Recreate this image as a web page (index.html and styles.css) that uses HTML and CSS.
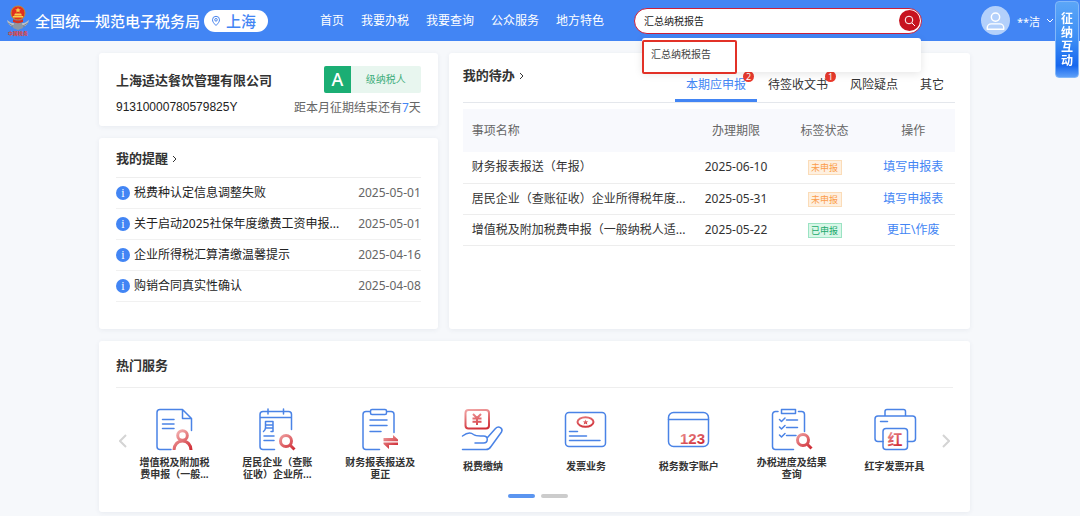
FILE: index.html
```html
<!DOCTYPE html>
<html lang="zh-CN">
<head>
	<meta charset="UTF-8">
	<meta name="viewport" content="width=device-width,initial-scale=1.0">
	<title>全国统一规范电子税务局</title>
	<link rel="stylesheet" href="styles.css">
</head>
<body>
	<svg class="defs" width="0" height="0" aria-hidden="true">
		<defs>
			<linearGradient id="red" x1="0" y1="0" x2="0.6" y2="1">
				<stop offset="0" stop-color="#f0a5a5"/>
				<stop offset="1" stop-color="#cf2a33"/>
			</linearGradient>
			<linearGradient id="redLine" gradientUnits="userSpaceOnUse" x1="25" y1="24" x2="39" y2="43">
				<stop offset="0" stop-color="#f3b0b0"/>
				<stop offset="1" stop-color="#cf2a33"/>
			</linearGradient>
			<linearGradient id="redCard" gradientUnits="userSpaceOnUse" x1="14" y1="2" x2="18" y2="23">
				<stop offset="0" stop-color="#f0a0a0"/>
				<stop offset="1" stop-color="#cf2a33"/>
			</linearGradient>
		</defs>
	</svg>
	<header class="header">
		<svg class="logo" viewBox="0 0 24 32" aria-hidden="true">
			<path d="M1 15c1 5 4 7 11 7s10-2 11-7c-3 2-4 3-5 3H6c-1 0-2-1-5-3z" fill="#b9c0c9"/>
			<path d="M2 18l5 3M22 18l-5 3M5 22l4-2M19 22l-4-2" stroke="#7d8794" stroke-width="1"/>
			<path d="M8 18h8l1 5-5 2-5-2z" fill="#8e97a3"/>
			<circle cx="12" cy="8" r="7" fill="#e0301e" stroke="#c98a2b"/>
			<path d="M12 2.500l.8 1.700 1.900.2-1.400 1.300.4 1.900-1.700-1-1.700 1 .4-1.900-1.400-1.300 1.900-.2zM7 11h10v1.500H7zM9 8.500h6l1 2H8z" fill="#f8cf4c"/>
			<path d="M7 14c2 2 8 2 10 0v3c-3 1.500-7 1.500-10 0z" fill="#d8321f"/>
			<text x="12" y="30" text-anchor="middle" class="logo-text">中国税务</text>
		</svg>
		<h1 class="site-name">全国统一规范电子税务局</h1>
		<button type="button" class="area">
			<svg width="10" height="12" viewBox="0 0 10 12" fill="none" stroke="#4a86ee" aria-hidden="true">
				<path d="M5 10.500C2.500 8 1.500 6.500 1.500 4.800a3.500 3.500 0 0 1 7 0C8.500 6.500 7.500 8 5 10.500z"/>
				<circle cx="5" cy="4.800" r="1.300"/>
			</svg>
			<span>上海</span>
		</button>
		<nav class="nav">
			<a href="#">首页</a>
			<a href="#">我要办税</a>
			<a href="#">我要查询</a>
			<a href="#">公众服务</a>
			<a href="#">地方特色</a>
		</nav>
		<form class="search">
			<input type="text" class="search-input" value="汇总纳税报告" aria-label="搜索">
			<button type="button" class="search-btn" aria-label="搜索">
				<svg width="12" height="12" viewBox="0 0 12 12" fill="none" stroke="#fff" aria-hidden="true">
					<circle cx="5" cy="5" r="3.800"/><path d="M8 8l3 3"/>
				</svg>
			</button>
			<div class="suggest">
				<a href="#" class="suggest-item">汇总纳税报告</a>
				<span class="suggest-mark"></span>
			</div>
		</form>
		<button type="button" class="user">
			<svg class="avatar" viewBox="0 0 30 30" fill="none" aria-hidden="true">
				<circle cx="15" cy="15" r="15" fill="#b3d0fb"/>
				<circle cx="15" cy="11.500" r="4.300" stroke="#fff" stroke-width="1.500"/>
				<path d="M6.500 24v-1.500c0-2.500 2-4 4-4h9c2 0 4 1.500 4 4V24z" stroke="#fff" stroke-width="1.500" stroke-linejoin="round"/>
			</svg>
			<span>**洁</span>
			<svg class="user-arrow" width="8" height="6" viewBox="0 0 8 6" fill="none" stroke="#fff" aria-hidden="true"><path d="M1 1l3 3 3-3"/></svg>
		</button>
	</header>
	<a href="#" class="interact">征纳互动</a>

	<main class="main">
		<div class="left">
			<section class="card company">
				<div class="company-row">
					<h2 class="title">上海适达餐饮管理有限公司</h2>
					<div class="level"><b>A</b><span>级纳税人</span></div>
				</div>
				<div class="company-row">
					<span class="company-no">91310000780579825Y</span>
					<span class="deadline">距本月征期结束还有<em>7</em>天</span>
				</div>
			</section>
			<section class="card remind">
				<h2 class="title remind-title"><a href="#">我的提醒<svg width="6" height="8" viewBox="0 0 6 8" fill="none" stroke="#333" aria-hidden="true"><path d="M1 1l3 3-3 3"/></svg></a></h2>
				<ul class="remind-list">
					<li><i class="info">i</i><a href="#">税费种认定信息调整失败</a><time>2025-05-01</time></li>
					<li><i class="info">i</i><a href="#">关于启动2025社保年度缴费工资申报...</a><time>2025-05-01</time></li>
					<li><i class="info">i</i><a href="#">企业所得税汇算清缴温馨提示</a><time>2025-04-16</time></li>
					<li><i class="info">i</i><a href="#">购销合同真实性确认</a><time>2025-04-08</time></li>
				</ul>
			</section>
		</div>

		<section class="card todo">
			<div class="todo-head">
				<h2 class="title"><a href="#">我的待办<svg width="6" height="8" viewBox="0 0 6 8" fill="none" stroke="#333" aria-hidden="true"><path d="M1 1l3 3-3 3"/></svg></a></h2>
				<div class="tabs">
					<button type="button" class="tab active">本期应申报<span class="badge">2</span></button>
					<button type="button" class="tab">待签收文书<span class="badge">1</span></button>
					<button type="button" class="tab">风险疑点</button>
					<button type="button" class="tab">其它</button>
				</div>
			</div>
			<table class="table">
				<thead>
					<tr><th class="col-name">事项名称</th><th class="col-date">办理期限</th><th class="col-tag">标签状态</th><th class="col-op">操作</th></tr>
				</thead>
				<tbody>
					<tr>
						<td class="col-name">财务报表报送（年报）</td>
						<td>2025-06-10</td>
						<td><span class="tag">未申报</span></td>
						<td><a href="#">填写申报表</a></td>
					</tr>
					<tr>
						<td class="col-name">居民企业（查账征收）企业所得税年度...</td>
						<td>2025-05-31</td>
						<td><span class="tag">未申报</span></td>
						<td><a href="#">填写申报表</a></td>
					</tr>
					<tr>
						<td class="col-name">增值税及附加税费申报（一般纳税人适...</td>
						<td>2025-05-22</td>
						<td><span class="tag tag-done">已申报</span></td>
						<td><a href="#">更正\作废</a></td>
					</tr>
				</tbody>
			</table>
		</section>

		<section class="card service">
			<h2 class="title service-title">热门服务</h2>
			<div class="carousel">
				<button type="button" class="arrow" aria-label="上一页"><svg width="8" height="14" viewBox="0 0 8 14" aria-hidden="true"><path d="M7 1L1 7l6 6"/></svg></button>
				<div class="service-list">
					<a href="#" class="service-item">
						<svg class="icon" viewBox="0 0 44 44" aria-hidden="true">
							<path d="M19 42.500H8a3 3 0 0 1-3-3v-34a3 3 0 0 1 3-3h22.500l9 9v12M30.500 2.500v9h9M10.500 12.500h11.500M10.500 17h11.500M10.500 21.500h11.500"/>
							<g class="red"><circle cx="30.500" cy="28.500" r="4.800"/><path d="M22 43c0-5 3.500-9 8.500-9s8.500 4 8.500 9"/></g>
						</svg>
						<span>增值税及附加税费申报（一般...</span>
					</a>
					<a href="#" class="service-item">
						<svg class="icon" viewBox="0 0 44 44" aria-hidden="true">
							<path d="M19.500 42.500H8a3 3 0 0 1-3-3v-32a3 3 0 0 1 3-3h25.500a3 3 0 0 1 3 3v15M5 10.500h31.500M13 2v5M28.500 2v5M9 29h10M9 33.500h10"/>
							<path d="M10.500 14.500h7.500v10h-2M10.500 14.500v6q0 2.500-2 4M10.500 18h7.500M10.500 21h7.500"/>
							<g class="red"><circle cx="31" cy="34" r="5.500"/><path d="M35.500 38.500l4 4"/></g>
						</svg>
						<span>居民企业（查账征收）企业所...</span>
					</a>
					<a href="#" class="service-item">
						<svg class="icon" viewBox="0 0 44 44" aria-hidden="true">
							<path d="M21.500 42.500H8a3 3 0 0 1-3-3v-32a3 3 0 0 1 3-3h4.500M28.500 4.500H33a3 3 0 0 1 3 3v18M14 2.500h13a1.500 1.500 0 0 1 1.500 1.500v2a1.500 1.500 0 0 1-1.500 1.500H14A1.500 1.500 0 0 1 12.500 6V4A1.500 1.500 0 0 1 14 2.500zM12 13h17M12 18.500h17M12 24.500h11"/>
							<path class="red-fill" d="M25.500 31h9.500v-3l5 4.500v1.700H25.500zM40 35.500v2.500h-9v4l-5.500-5v-1.500z"/>
						</svg>
						<span>财务报表报送及更正</span>
					</a>
					<a href="#" class="service-item">
						<svg class="icon" viewBox="0 0 44 44" aria-hidden="true">
							<path d="M1.500 29c4-3 8-4 11-1.500 2 1.500 4 1.500 7 1.500h3c5 0 5 7 0 7H14M26.500 30.500l8-9c3-3 8-.5 6 3.500L30 39.500c-1.500 2.500-3 3-5 3H1.500"/>
							<g class="red red-area"><rect x="4.500" y="3" width="23.500" height="18.500" rx="3"/><path d="M12 7l4 4 4-4M16 11v7M11.500 11.500h9M11.500 14.800h9"/></g>
						</svg>
						<span>税费缴纳</span>
					</a>
					<a href="#" class="service-item">
						<svg class="icon" viewBox="0 0 44 44" aria-hidden="true">
							<rect x="1.500" y="5.500" width="40" height="34" rx="3.500"/>
							<path d="M5.500 24.500h8M5.500 29h17M5.500 33.500h30.500"/>
							<g class="red red-area"><ellipse cx="21.500" cy="15" rx="8" ry="4.800"/></g>
							<path class="red-fill" d="M21.500 12.500l.8 1.700 2 .2-1.500 1.200.5 1.800-1.800-1-1.800 1 .5-1.800-1.500-1.200 2-.2z"/>
						</svg>
						<span>发票业务</span>
					</a>
					<a href="#" class="service-item">
						<svg class="icon" viewBox="0 0 44 44" aria-hidden="true">
							<rect x="1.500" y="5.500" width="40" height="34" rx="5"/>
							<path d="M1.500 12.500h40"/>
							<text x="25.500" y="36.500" text-anchor="middle" class="icon-num">123</text>
						</svg>
						<span>税务数字账户</span>
					</a>
					<a href="#" class="service-item">
						<svg class="icon" viewBox="0 0 44 44" aria-hidden="true">
							<path d="M23.500 42.500H5.500a3 3 0 0 1-3-3v-32a3 3 0 0 1 3-3H8M28.500 4.500h3a3 3 0 0 1 3 3v17M11.500 2.500h14v4h-14zM16.500 13h11M16.500 20.500h11M16.500 28.500h9.500M9.500 12.500l2 2 3.500-3.500M9.500 20l2 2 3.500-3.500M9.500 28l2 2 3.500-3.500"/>
							<g class="red"><circle cx="33" cy="33" r="5.500"/><path d="M37.500 37.500l4 4"/></g>
						</svg>
						<span>办税进度及结果查询</span>
					</a>
					<a href="#" class="service-item">
						<svg class="icon" viewBox="0 0 44 44" aria-hidden="true">
							<path d="M10 34.500H5a3 3 0 0 1-3-3V12a3 3 0 0 1 3-3h34.500a3 3 0 0 1 3 3v19.500a3 3 0 0 1-3 3h-5M12 9V4.500a2 2 0 0 1 2-2h16.500a2 2 0 0 1 2 2V9M7.500 14.500h7"/>
							<rect x="10" y="21.500" width="24.500" height="21" rx="3"/>
							<text x="22" y="37.500" text-anchor="middle" class="icon-hong">红</text>
						</svg>
						<span>红字发票开具</span>
					</a>
				</div>
				<button type="button" class="arrow" aria-label="下一页"><svg width="8" height="14" viewBox="0 0 8 14" aria-hidden="true"><path d="M1 1l6 6-6 6"/></svg></button>
			</div>
			<div class="dots">
				<button type="button" class="dot active" aria-label="第1页"></button>
				<button type="button" class="dot" aria-label="第2页"></button>
			</div>
		</section>
	</main>
</body>
</html>
```

FILE: styles.css
```css
*{
	margin:0;padding:0;box-sizing:border-box;
}
body{
	background-color:#f6f8fb;color:#333;font-size:12px;line-height:16px;
	font-family:"Noto Sans","Noto Sans CJK SC",sans-serif;
}
a{
	color:inherit;text-decoration:none;
}
button,input{
	font-family:inherit;border:0;background:none;outline:0;
}
button{
	cursor:pointer;
}
ul{
	list-style:none;
}
.defs{
	position:absolute;
}

/* 头部 */
.header{
	display:flex;align-items:center;height:41px;padding:0 26px 0 6px;
	background-color:#4285f4;color:#fff;
}
.logo{
	width:24px;height:32px;margin-right:5px;
}
.logo-text{
	font-size:5px;font-weight:bold;fill:#e8402c;
}
.site-name{
	font-size:15px;font-weight:500;line-height:20px;white-space:nowrap;
	font-family:"Noto Sans CJK SC",sans-serif;
}
.area{
	display:flex;align-items:center;gap:5px;height:22px;padding:0 12px 0 7px;margin-left:4px;
	border-radius:11px;background-color:#fff;color:#4285f4;font-size:15px;font-weight:500;white-space:nowrap;
}
.nav{
	display:flex;gap:17px;margin-left:52px;white-space:nowrap;
}
.search{
	display:flex;align-items:center;position:relative;width:288px;height:26px;margin-left:30px;padding:0 1px 0 9px;
	border:1px solid #c9203a;border-radius:13px;background-color:#fff;
}
.search-input{
	flex:1;min-width:0;font-size:10px;color:#222;
}
.search-btn{
	display:flex;align-items:center;justify-content:center;width:21px;height:21px;
	border-radius:50%;background-color:#c7131f;
}
.suggest{
	position:absolute;z-index:9;left:7px;right:0;top:29px;padding:8px 9px 10px;
	border-radius:3px;background-color:#fff;box-shadow:0 2px 8px rgba(0,0,0,.1);
}
.suggest-item{
	display:block;font-size:10px;color:#444;
}
.suggest-mark{
	position:absolute;left:0;top:2px;width:95px;height:34px;border:2px solid #e23127;border-radius:2px;
}
.user{
	display:flex;align-items:center;margin-left:auto;color:#fff;font-size:11px;
}
.avatar{
	width:29px;height:29px;margin-right:7px;
}
.user-arrow{
	margin-left:6px;
}
.interact{
	position:fixed;z-index:10;right:1px;top:1px;width:24px;padding:10px 5px 9px;border-radius:4px;
	background:linear-gradient(#5ba6f7,#3c8df5 50%,#1667ee 85%,#5d9ff8);color:#fff;
	font-size:12px;font-weight:bold;line-height:14px;border:1px solid #82b8fa;
}

/* 内容 */
.main{
	display:grid;grid-template-columns:39fr 60fr;gap:12px 11px;padding:12px 110px 4px 99px;
}
.card{
	border-radius:3px;background-color:#fff;box-shadow:0 1px 5px rgba(40,60,100,.07);
}
.title{
	font-size:13px;font-weight:bold;line-height:20px;white-space:nowrap;
}
.title svg{
	margin-left:4px;
}
.left{
	display:flex;flex-direction:column;gap:12px;
}
.company{
	padding:13px 17px 10px;
}
.company-row{
	display:flex;align-items:center;justify-content:space-between;line-height:17px;
}
.company-row + .company-row{
	margin-top:6px;
}
.level{
	display:flex;width:97px;height:27px;border-radius:2px;overflow:hidden;
	background-color:#e8f6ef;color:#3fae7c;font-size:10px;line-height:27px;text-align:center;
}
.level b{
	width:27px;background-color:#1bae74;color:#fff;font-size:18px;font-weight:500;
}
.level span{
	flex:1;
}
.company-no{
	font-family:"Liberation Sans",Arial,sans-serif;color:#222;
}
.deadline{
	color:#666;
}
.deadline em{
	color:#4285f4;font-style:normal;
}
.remind{
	padding:10px 17px 27px;
}
.remind-title{
	padding-bottom:9px;border-bottom:1px solid #eee;
}
.remind-list li{
	display:flex;align-items:center;height:31px;border-bottom:1px solid #f1f1f1;white-space:nowrap;color:#222;
}
.remind-list a{
	flex:1;
}
.remind-list time{
	color:#666;
}
.info{
	width:14px;height:14px;margin-right:4px;border-radius:50%;background-color:#4285f4;color:#fff;
	font-size:12px;font-style:normal;line-height:14px;text-align:center;
	font-family:"Liberation Serif",serif;
}

/* 我的待办 */
.todo{
	padding:12px 15px 0 14px;
}
.todo-head{
	display:flex;justify-content:space-between;align-items:flex-start;border-bottom:1px solid #e4e7ec;
}
.tabs{
	display:flex;padding-top:9px;
}
.tab{
	position:relative;padding:3px 11px 6px;border-bottom:3px solid transparent;
	color:#333;font-size:12px;line-height:16px;white-space:nowrap;
}
.tab.active{
	color:#4285f4;border-color:#4285f4;
}
.badge{
	position:absolute;right:3px;top:-3px;width:11px;height:11px;border-radius:50%;
	background-color:#ea3a2d;color:#fff;font-size:9px;line-height:11px;text-align:center;
}
.table{
	width:100%;margin-top:6px;table-layout:fixed;border-collapse:collapse;text-align:center;white-space:nowrap;
}
.table th{
	height:43px;background-color:#f8f9fd;color:#666;font-weight:normal;
}
.table td{
	height:31px;border-bottom:1px solid #ededed;
}
.table .col-name{
	padding-left:9px;text-align:left;
}
.col-date{
	width:17%;
}
.col-tag{
	width:19%;
}
.col-op{
	width:17%;
}
.table td a{
	color:#4285f4;
}
.tag{
	display:inline-block;width:34px;border:1px solid #fbdcb8;background-color:#fef0e0;color:#fb9d4b;
	font-size:9px;line-height:13px;vertical-align:middle;
}
.tag-done{
	border-color:#9be3c3;background-color:#d8f7e8;color:#22a96c;
}

/* 热门服务 */
.service{
	grid-column:1 / 3;padding:14px 17px;
}
.service-title{
	padding-bottom:12px;border-bottom:1px solid #eee;
}
.carousel{
	display:flex;align-items:flex-start;margin-top:19px;
}
.arrow{
	width:14px;height:14px;margin-top:27px;
}
.arrow svg{
	display:block;margin:0 auto;fill:none;stroke:#d4d4d4;stroke-width:2;
}
.service-list{
	display:grid;grid-template-columns:repeat(8,1fr);flex:1;margin:0 -7px;
}
.service-item{
	display:flex;flex-direction:column;align-items:center;
}
.service-item span{
	display:flex;align-items:center;width:74px;min-height:20px;margin-top:5px;justify-content:center;
	font-size:10px;font-weight:bold;line-height:12px;text-align:center;
}
.icon{
	width:44px;height:44px;fill:none;stroke:#4a83e6;stroke-width:1.5;stroke-linecap:round;stroke-linejoin:round;
}
.icon .red{
	stroke:url(#redLine);stroke-width:3;stroke-linecap:butt;
}
.icon .red-area{
	stroke:url(#redCard);stroke-width:2;
}
.icon .red-fill{
	fill:url(#red);stroke:none;
}
.icon-num,.icon-hong{
	fill:url(#red);stroke:none;font-weight:bold;
}
.icon-num{
	font-family:"Liberation Sans",Arial,sans-serif;font-size:15px;
}
.icon-hong{
	font-size:15px;
}
.dots{
	display:flex;justify-content:center;gap:6px;margin-top:14px;padding-left:6px;
}
.dot{
	width:27px;height:4px;border-radius:2px;background-color:#ccc;
}
.dot.active{
	background-color:#5b95f0;
}
```
